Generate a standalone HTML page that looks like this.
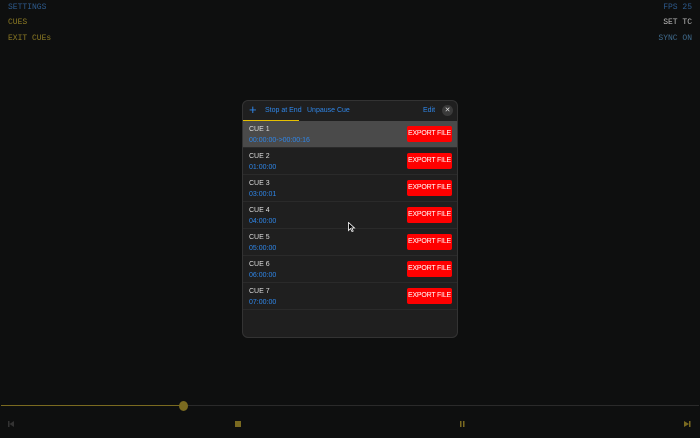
<!DOCTYPE html>
<html><head><style>
body{margin:0;width:700px;height:438px;background:#0e0f0f;position:relative;overflow:hidden;font-family:"Liberation Sans",sans-serif}
.m{position:absolute;font-family:"Liberation Mono",monospace;font-size:8px;white-space:nowrap}
.modal{position:absolute;left:242px;top:100px;width:216px;height:238px;background:#1f1f1f;border:1px solid #333;border-radius:6px;box-sizing:border-box;overflow:hidden}
.hdr{position:absolute;left:0;top:0;width:100%;height:20px;font-size:7px;color:#2f86e8;white-space:nowrap}
.row{position:absolute;left:0;width:100%;height:27px;border-bottom:1px solid #2a2a2a;box-sizing:border-box;white-space:nowrap}
.row .t{position:absolute;left:6px;top:5px;font-size:7px;color:#ddd}
.row .c{position:absolute;left:6px;top:16px;font-size:7px;color:#2f86e8}
.row .b{position:absolute;left:164px;top:5px;width:45px;height:16px;background:#f00;border-radius:2px;color:#fff;font-size:7px;line-height:16px;text-align:center;white-space:nowrap;letter-spacing:-0.2px}
</style></head><body>
<div class="m" style="left:8px;top:3px;color:#2d5a8c">SETTINGS</div>
<div class="m" style="left:8px;top:18px;color:#8c7a24">CUES</div>
<div class="m" style="left:8px;top:34px;color:#8c7a24">EXIT CUEs</div>
<div class="m" style="right:8px;top:3px;color:#2d5a8c">FPS 25</div>
<div class="m" style="right:8px;top:18px;color:#bbb">SET TC</div>
<div class="m" style="right:8px;top:34px;color:#3f6a8c">SYNC ON</div>
<div class="modal">
<div class="hdr">
<span style="position:absolute;left:6px;top:1px;font-size:13px;line-height:16px">+</span>
<span style="position:absolute;left:22px;top:6px">Stop at End</span>
<span style="position:absolute;left:64px;top:6px">Unpause Cue</span>
<span style="position:absolute;left:180px;top:6px">Edit</span>
<span style="position:absolute;left:199px;top:4px;width:11px;height:11px;border-radius:50%;background:#3a3a3a;color:#ddd;font-size:7px;line-height:11px;text-align:center">✕</span>
<div style="position:absolute;left:0;top:19px;width:56px;height:2px;background:#e6c000"></div>
</div>
<div class="row" style="top:20px;background:#4a4a4a"><div class="t">CUE 1</div><div class="c">00:00:00-&gt;00:00:16</div><div class="b">EXPORT FILE</div></div>
<div class="row" style="top:47px"><div class="t">CUE 2</div><div class="c">01:00:00</div><div class="b">EXPORT FILE</div></div>
<div class="row" style="top:74px"><div class="t">CUE 3</div><div class="c">03:00:01</div><div class="b">EXPORT FILE</div></div>
<div class="row" style="top:101px"><div class="t">CUE 4</div><div class="c">04:00:00</div><div class="b">EXPORT FILE</div></div>
<div class="row" style="top:128px"><div class="t">CUE 5</div><div class="c">05:00:00</div><div class="b">EXPORT FILE</div></div>
<div class="row" style="top:155px"><div class="t">CUE 6</div><div class="c">06:00:00</div><div class="b">EXPORT FILE</div></div>
<div class="row" style="top:182px"><div class="t">CUE 7</div><div class="c">07:00:00</div><div class="b">EXPORT FILE</div></div>
</div>
<div style="position:absolute;left:1px;top:405px;width:182px;height:1px;background:#7a6a20"></div>
<div style="position:absolute;left:183px;top:405px;width:516px;height:1px;background:#2a2a2a"></div>
<div style="position:absolute;left:179px;top:401px;width:9px;height:10px;border-radius:50%;background:#7a6a20"></div>
<svg style="position:absolute;left:0;top:416px" width="700" height="20">
<rect x="8" y="5" width="1.5" height="6" fill="#333"/><path d="M9.5 8 L14 5 L14 11Z" fill="#333"/>
<rect x="235" y="5" width="6" height="6" fill="#7a6a20"/>
<rect x="460" y="5" width="1.5" height="6" fill="#7a6a20"/><rect x="463" y="5" width="1.5" height="6" fill="#7a6a20"/>
<path d="M684 5 L689 8 L684 11Z" fill="#7a6a20"/><rect x="689" y="5" width="1.5" height="6" fill="#7a6a20"/>
</svg>
<svg style="position:absolute;left:348px;top:222px" width="8" height="11"><path d="M0.5 0.5 L0.5 8.5 L2.5 6.5 L4 9.5 L5.2 9 L3.8 6 L6.5 6Z" fill="#000" stroke="#fff" stroke-width="0.8"/></svg>
</body></html>
